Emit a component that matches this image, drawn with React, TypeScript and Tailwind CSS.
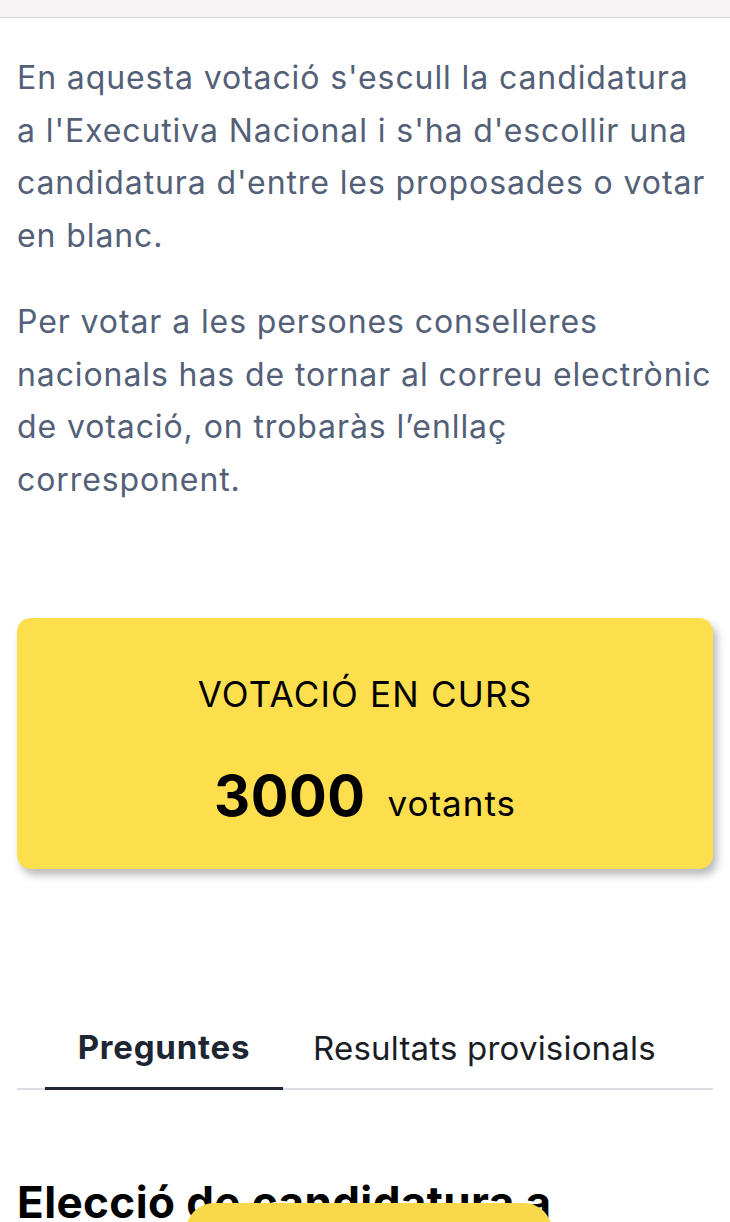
export default function App() {
  const font = { fontFamily: 'Inter, "Noto Sans", sans-serif' };
  return (
    <div className="relative h-[1222px] overflow-hidden bg-white" style={font}>
      {/* Top bar */}
      <div className="h-[18px] bg-[#f6f4f5] border-b border-[#d9d7d8]" />

      <div className="px-[17px]">
        {/* Intro */}
        <div className="pt-[34px] text-[32px] leading-[52.5px] text-[#536078] tracking-[0.9px]">
          <p>
            En aquesta votació s'escull la candidatura a l'Executiva Nacional i s'ha d'escollir una candidatura
            d'entre les proposades o votar en blanc.
          </p>
          <p className="mt-[34px]">
            Per votar a les persones conselleres nacionals has de tornar al correu electrònic de votació, on
            trobaràs l’enllaç corresponent.
          </p>
        </div>

        {/* Status card */}
        <div className="mt-[112px] h-[251px] rounded-[14px] bg-[#fddf4e] shadow-[4px_6px_8px_rgba(0,0,0,0.28)] flex flex-col items-center pt-[52px]">
          <p className="text-[35px] leading-[48px] text-black tracking-[1.2px]">VOTACIÓ EN CURS</p>
          <div className="mt-[50px] flex items-baseline gap-[22px] text-black">
            <span className="text-[56px] leading-[56px] font-bold tracking-[0.5px]">3000</span>
            <span className="text-[35px] leading-[40px] tracking-[1px]">votants</span>
          </div>
        </div>

        {/* Tabs */}
        <div className="mt-[156px] flex border-b-2 border-[#dcdde0]">
          <button className="ml-[28px] w-[238px] pb-[18px] text-[33px] leading-[44px] font-bold text-[#1e2533] border-b-[3px] border-[#1f2737] -mb-[2px] tracking-[0.8px]">
            Preguntes
          </button>
          <button className="ml-[30px] pb-[18px] text-[33px] leading-[44px] text-[#1a1d24] tracking-[0.2px]">
            Resultats provisionals
          </button>
        </div>

        {/* Question title */}
        <h2 className="mt-[86px] text-[44px] leading-[52px] font-bold text-black tracking-[0.4px]">
          Elecció de candidatura a
        </h2>
      </div>

      {/* Floating action pill */}
      <div className="absolute left-[186px] top-[1203px] w-[366px] h-[60px] rounded-[28px] bg-[#fad84b]" />
    </div>
  );
}
